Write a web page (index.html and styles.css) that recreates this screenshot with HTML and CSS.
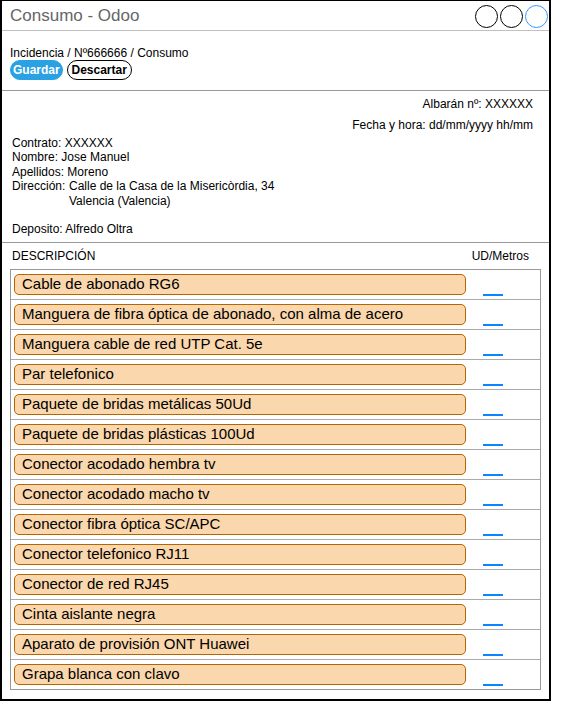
FILE: index.html
```html
<!DOCTYPE html>
<html lang="es">
<head>
<meta charset="utf-8">
<title>Consumo - Odoo</title>
<link rel="stylesheet" href="styles.css">
</head>
<body>
<div class="frame">
  <header class="titlebar">
    <div class="title">Consumo - Odoo</div>
    <div class="circles">
      <span class="circle"></span>
      <span class="circle"></span>
      <span class="circle blue"></span>
    </div>
  </header>
  <section class="toolbar">
    <div class="crumbs">Incidencia / Nº666666 / Consumo</div>
    <div class="buttons">
      <button class="btn primary">Guardar</button>
      <button class="btn outline">Descartar</button>
    </div>
  </section>
  <section class="info">
    <div class="right-line">Albarán nº: XXXXXX</div>
    <div class="right-line second">Fecha y hora: dd/mm/yyyy hh/mm</div>
    <div class="details">
      <div>Contrato: XXXXXX</div>
      <div>Nombre: Jose Manuel</div>
      <div>Apellidos: Moreno</div>
      <div class="addr">
        <span class="addr-label">Dirección:</span>
        <span class="addr-value">Calle de la Casa de la Misericòrdia, 34<br>Valencia (Valencia)</span>
      </div>
      <div class="blank">&nbsp;</div>
      <div>Deposito: Alfredo Oltra</div>
    </div>
  </section>
  <section class="lines">
    <div class="lines-head">
      <span>DESCRIPCIÓN</span>
      <span>UD/Metros</span>
    </div>
    <div class="table">
      <div class="row"><div class="pill">Cable de abonado RG6</div><span class="qty"></span></div>
      <div class="row"><div class="pill">Manguera de fibra óptica de abonado, con alma de acero</div><span class="qty"></span></div>
      <div class="row"><div class="pill">Manguera cable de red UTP Cat. 5e</div><span class="qty"></span></div>
      <div class="row"><div class="pill">Par telefonico</div><span class="qty"></span></div>
      <div class="row"><div class="pill">Paquete de bridas metálicas 50Ud</div><span class="qty"></span></div>
      <div class="row"><div class="pill">Paquete de bridas plásticas 100Ud</div><span class="qty"></span></div>
      <div class="row"><div class="pill">Conector acodado hembra tv</div><span class="qty"></span></div>
      <div class="row"><div class="pill">Conector acodado macho tv</div><span class="qty"></span></div>
      <div class="row"><div class="pill">Conector fibra óptica SC/APC</div><span class="qty"></span></div>
      <div class="row"><div class="pill">Conector telefonico RJ11</div><span class="qty"></span></div>
      <div class="row"><div class="pill">Conector de red RJ45</div><span class="qty"></span></div>
      <div class="row"><div class="pill">Cinta aislante negra</div><span class="qty"></span></div>
      <div class="row"><div class="pill">Aparato de provisión ONT Huawei</div><span class="qty"></span></div>
      <div class="row"><div class="pill">Grapa blanca con clavo</div><span class="qty"></span></div>
    </div>
  </section>
</div>
</body>
</html>
```
FILE: styles.css
```css
* { box-sizing: border-box; }
html, body { margin: 0; padding: 0; background: #fff; }
body {
  font-family: "Liberation Sans", Arial, sans-serif;
  color: #000;
  font-size: 12px;
}
.frame {
  width: 551px;
  height: 701px;
  border: 2px solid #000;
  border-top-width: 1px;
  display: flex;
  flex-direction: column;
}
.titlebar {
  height: 30px;
  flex: none;
  border-bottom: 1px solid #c0c0c0;
  display: flex;
  align-items: center;
  justify-content: space-between;
  padding: 0 1px 0 8px;
}
.title {
  font-size: 17px;
  color: #666;
  margin-top: 1px;
}
.circles { display: flex; gap: 2px; margin-top: 1px; }
.circle {
  width: 23px;
  height: 23px;
  border-radius: 50%;
  border: 1px solid #000;
  display: block;
}
.circle.blue { border-color: #3399ff; }
.toolbar {
  height: 60px;
  flex: none;
  padding: 15px 8px 0;
  border-bottom: 1px solid #999;
}
.crumbs { line-height: 14px; }
.buttons { display: flex; gap: 4px; margin-top: 0; }
.btn {
  font-family: "Liberation Sans", Arial, sans-serif;
  font-size: 12px;
  font-weight: bold;
  height: 20px;
  padding: 0 2px;
  border-radius: 10px;
  line-height: 18px;
  margin: 0;
}
.btn.primary {
  background: #2aa1e2;
  color: #fff;
  border: 1px solid #2aa1e2;
  min-width: 51px;
}
.btn.outline {
  background: #fff;
  color: #000;
  border: 1px solid #000;
  min-width: 65px;
}
.info {
  height: 152px;
  flex: none;
  padding: 6px 16px 0 10px;
  border-bottom: 1px solid #999;
  line-height: 14.4px;
}
.right-line { text-align: right; }
.second { margin-top: 6.6px; }
.details { margin-top: 3.6px; }
.addr { display: flex; }
.addr-label { width: 57px; flex: none; }
.lines {
  padding: 6px 9px 0 8px;
  flex: 1;
}
.lines-head {
  display: flex;
  justify-content: space-between;
  line-height: 14px;
  padding: 0 11px 0 2px;
}
.table {
  margin-top: 6px;
  border: 1px solid #999;
  width: 531px;
}
.row {
  height: 30px;
  border-bottom: 1px solid #aaa;
  display: flex;
  align-items: flex-start;
  padding: 4px 0 0 3px;
}
.row:last-child { height: 29px; border-bottom: none; }
.pill {
  width: 452px;
  height: 21px;
  border: 1px solid #b46504;
  border-radius: 5px;
  background: #fad7ac;
  font-size: 15px;
  line-height: 18px;
  padding-left: 7px;
  white-space: nowrap;
}
.qty {
  display: block;
  width: 20px;
  height: 2px;
  background: #0a84ff;
  margin: 20px 0 0 17px;
}
```
